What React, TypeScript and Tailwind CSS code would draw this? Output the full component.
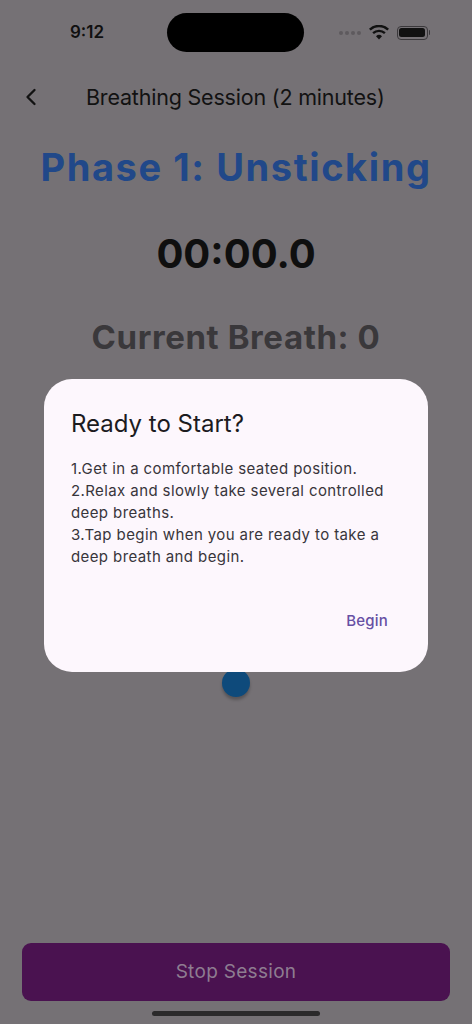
import { ChevronLeft } from 'lucide-react';

function StatusBar() {
  return (
    <div className="relative flex h-[64px] items-center justify-between px-[70px] pt-[1px]">
      <span className="text-[17px] font-semibold text-[#101010]">9:12</span>
      <div className="absolute left-[167px] top-[13px] h-[39px] w-[137px] rounded-full bg-black" />
      <div className="-mr-[28px] flex items-center gap-[8px]">
        <div className="flex gap-[2px]">
          {[0, 1, 2, 3].map((i) => (
            <div key={i} className="h-[4px] w-[4px] rounded-full bg-[#5e5a5e]" />
          ))}
        </div>
        <svg width="20" height="15" viewBox="0 0 20 15">
          <path d="M10 14.5l3-3.3a4.3 4.3 0 0 0-6 0z" fill="#111" />
          <path d="M4.9 9.1a7.3 7.3 0 0 1 10.2 0l1.6-1.8a9.8 9.8 0 0 0-13.4 0z" fill="#111" />
          <path d="M1.7 5.6a11.9 11.9 0 0 1 16.6 0L20 3.8a14.4 14.4 0 0 0-20 0z" fill="#111" />
        </svg>
        <div className="flex items-center">
          <div className="flex h-[14px] w-[31px] items-center rounded-[4px] border border-[#3a383b] p-[1.5px]">
            <div className="h-full w-full rounded-[2.5px] bg-[#111]" />
          </div>
          <div className="ml-[1px] h-[5px] w-[1.5px] rounded-r bg-[#3a383b]" />
        </div>
      </div>
    </div>
  );
}

export default function App() {
  return (
    <div
      className="relative flex h-[1024px] w-[472px] flex-col overflow-hidden bg-[#757175]"
      style={{ fontFamily: 'Inter, "Noto Sans", sans-serif' }}
    >
      <StatusBar />

      <div className="flex h-[66px] items-center px-[17px]">
        <ChevronLeft className="h-[28px] w-[28px] text-[#121212]" strokeWidth={2} />
        <span className="ml-[41px] text-[21.5px] tracking-[-0.2px] text-[#121212]">
          Breathing Session (2 minutes)
        </span>
      </div>

      <div className="flex flex-col items-center">
        <h1 className="mt-[12px] text-[38px] font-bold leading-[50px] tracking-[1.6px] text-[#214889]">
          Phase 1: Unsticking
        </h1>
        <div className="mt-[37px] text-[40px] font-bold leading-[50px] text-[#0f0f0f]">00:00.0</div>
        <div className="mt-[35px] text-[33px] font-bold leading-[46px] tracking-[0.6px] text-[#3a383b]">
          Current Breath: 0
        </div>

        <div className="mt-[309px] h-[28px] w-[28px] rounded-full bg-[#0e4a7b] shadow-[0_3px_3px_rgba(0,0,0,0.25)]" />
      </div>

      <div className="mt-auto flex flex-col items-center pb-[8px]">
        <button className="flex h-[58px] w-[428px] items-center justify-center rounded-[9px] bg-[#4a1250] text-[19px] tracking-[0.3px] text-[#8e7d91]">
          Stop Session
        </button>
        <div className="mt-[10px] h-[5px] w-[168px] rounded-full bg-[#2b2a2b]" />
      </div>

      <div className="absolute left-[44px] top-[379px] flex h-[293px] w-[384px] flex-col rounded-[28px] bg-[#fdf7fd] px-[27px] pt-[29px]">
        <h2 className="text-[24px] leading-[32px] text-[#1c1b1f]">Ready to Start?</h2>
        <p className="mt-[18px] text-[15px] leading-[22px] tracking-[0.4px] text-[#38353b]">
          1.Get in a comfortable seated position.
          <br />
          2.Relax and slowly take several controlled deep breaths.
          <br />
          3.Tap begin when you are ready to take a deep breath and begin.
        </p>
        <div className="mt-auto mb-[40px] flex justify-end pr-[13px]">
          <span className="text-[15px] font-medium tracking-[0.2px] text-[#6750a4]">Begin</span>
        </div>
      </div>
    </div>
  );
}
